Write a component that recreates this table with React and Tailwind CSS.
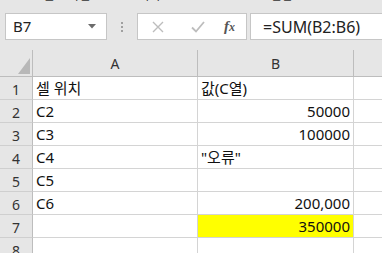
import React from 'react';

const FONT = { fontFamily: '"Noto Sans", "Noto Sans CJK KR", sans-serif' };

const rows = [
  ['셀 위치', '값(C열)', 'left'],
  ['C2', '50000', 'right'],
  ['C3', '100000', 'right'],
  ['C4', '"오류"', 'left'],
  ['C5', '', 'right'],
  ['C6', '200,000', 'right'],
  ['', '350000', 'right', true],
  ['', '', 'right'],
];

function FormulaBar() {
  return (
    <div className="flex items-center h-[42px] pt-[1px] pb-[6px] bg-[#e6e6e6]">
      <div className="ml-[5px] w-[102px] h-[27px] bg-white border border-[#c6c6c6] flex items-center pl-[7px] pr-[10px]">
        <span className="text-[15px] text-[#222] flex-1">B7</span>
        <svg width="8" height="5" viewBox="0 0 8 5"><path d="M0 0h8L4 4.5z" fill="#6b6b6b" /></svg>
      </div>
      <div className="w-[30px] flex flex-col items-center gap-[2px]">
        <span className="w-[2px] h-[2px] bg-[#a0a0a0]" />
        <span className="w-[2px] h-[2px] bg-[#a0a0a0]" />
        <span className="w-[2px] h-[2px] bg-[#a0a0a0]" />
      </div>
      <div className="w-[110px] h-[27px] bg-white border border-[#c6c6c6] flex items-center">
        <svg className="ml-[14px]" width="12" height="12" viewBox="0 0 12 12">
          <path d="M1 1l10 10M11 1L1 11" stroke="#bdbdbd" strokeWidth="1.4" />
        </svg>
        <svg className="ml-[27px]" width="14" height="12" viewBox="0 0 14 12">
          <path d="M1 6.5l4 4L13 1" stroke="#bdbdbd" strokeWidth="1.8" fill="none" />
        </svg>
        <span className="ml-[19px] text-[15px] italic font-bold text-[#555]" style={{ fontFamily: '"Liberation Serif", serif' }}>
          f<span className="text-[12px]">x</span>
        </span>
      </div>
      <div className="ml-[3px] flex-1 h-[27px] bg-white border border-r-0 border-[#c6c6c6] flex items-center pl-[12px]">
        <span className="text-[16px] text-[#222]">=SUM(B2:B6)</span>
      </div>
    </div>
  );
}

export default function App() {
  return (
    <div className="w-[382px] h-[253px] overflow-hidden bg-white" style={FONT}>
      {/* ribbon group labels, only their lower edge shows */}
      <div className="h-[8px] overflow-hidden bg-[#e6e6e6]">
        <div className="flex text-[12px] text-[#333] -mt-[13px]">
          <span className="ml-[43px]">셀 스타일</span>
          <span className="ml-[48px]">서식</span>
          <span className="ml-[110px]">편집</span>
        </div>
      </div>
      <FormulaBar />

      <div className="grid grid-cols-[33px_165px_156px_1fr] grid-rows-[27px_repeat(8,23px)] text-[15px] text-[#111]">
        <div className="bg-[#e6e6e6] border-r border-b border-[#bdbdbd] flex items-end justify-end pr-[2px] pb-[2px]">
          <svg width="12" height="16" viewBox="0 0 12 16"><path d="M12 0v16H0z" fill="#b8b8b8" /></svg>
        </div>
        <div className="bg-[#e6e6e6] border-r border-b border-[#bdbdbd] flex items-center justify-center text-[14px] text-[#333]">A</div>
        <div className="bg-[#e6e6e6] border-r border-b border-[#bdbdbd] flex items-center justify-center text-[14px] text-[#333]">B</div>
        <div className="bg-[#e6e6e6] border-b border-[#bdbdbd]" />

        {rows.map(([a, b, align, hi], i) => (
          <React.Fragment key={i}>
            <div className="bg-[#e6e6e6] border-r border-b border-r-[#bdbdbd] border-b-[#cfcfcf] flex items-center justify-center pt-[2px] text-[14px] text-[#333]">
              {i + 1}
            </div>
            <div className="border-r border-b border-[#d4d4d4] flex items-center pl-[3px] leading-none">{a}</div>
            <div className={`border-r border-b border-[#d4d4d4] flex items-center px-[3px] leading-none ${align === 'right' ? 'justify-end' : ''} ${hi ? 'bg-[#ffff00]' : ''}`}>
              {b}
            </div>
            <div className="border-b border-[#d4d4d4]" />
          </React.Fragment>
        ))}
      </div>
    </div>
  );
}
